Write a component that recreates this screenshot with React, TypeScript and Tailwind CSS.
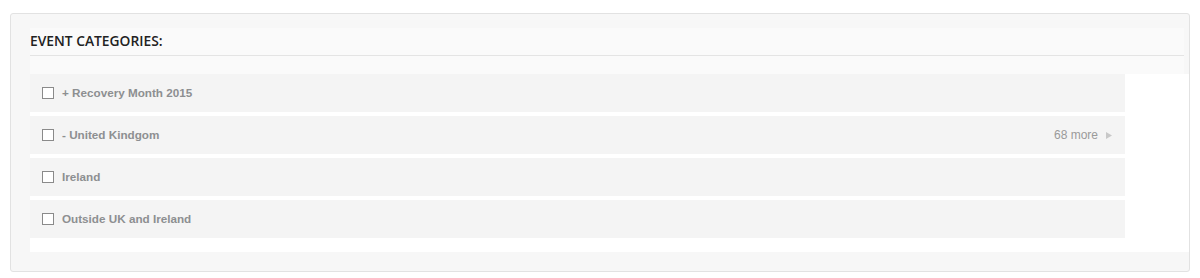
const CATEGORIES = [
  { label: "+ Recovery Month 2015" },
  { label: "- United Kindgom", more: 68 },
  { label: "Ireland" },
  { label: "Outside UK and Ireland" },
];

export default function App() {
  return (
    <div className="h-[278px] w-[1200px] bg-white pl-[10px] pt-[13px]">
      <div className="h-[259px] w-[1180px] rounded-[3px] border border-[#e2e2e2] bg-[#f7f7f7]">
        <div className="ml-[19px] mr-[5px] mt-[14px] bg-[#fafafa]">
          <div className="border-b border-[#e4e4e4] pb-[4px] pt-[3px] font-['Open_Sans',sans-serif] text-[13.8px] font-semibold leading-[20px] text-[#222]">
            EVENT CATEGORIES:
          </div>
          <div className="h-[18px]" />
        </div>
        <div className="ml-[19px] flex flex-col gap-[4px] bg-white pb-[14px]">
          {CATEGORIES.map((c) => (
            <div
              key={c.label}
              className="flex h-[38px] w-[1095px] items-center bg-[#f4f4f4] pl-[12px] pr-[13px] font-['Liberation_Sans',Arial,sans-serif]"
            >
              <span className="h-[12px] w-[12px] shrink-0 border border-[#8a8a8a] bg-white" />
              <span className="ml-[8px] text-[11.7px] font-bold text-[#8d8f91]">{c.label}</span>
              {c.more ? (
                <span className="ml-auto flex items-center gap-[8px] text-[12px] text-[#9a9a9a]">
                  {c.more} more
                  <svg width="6" height="7" viewBox="0 0 6 7">
                    <path d="M0 0 L6 3.5 L0 7 Z" fill="#c8c8c8" />
                  </svg>
                </span>
              ) : null}
            </div>
          ))}
        </div>
      </div>
    </div>
  );
}
